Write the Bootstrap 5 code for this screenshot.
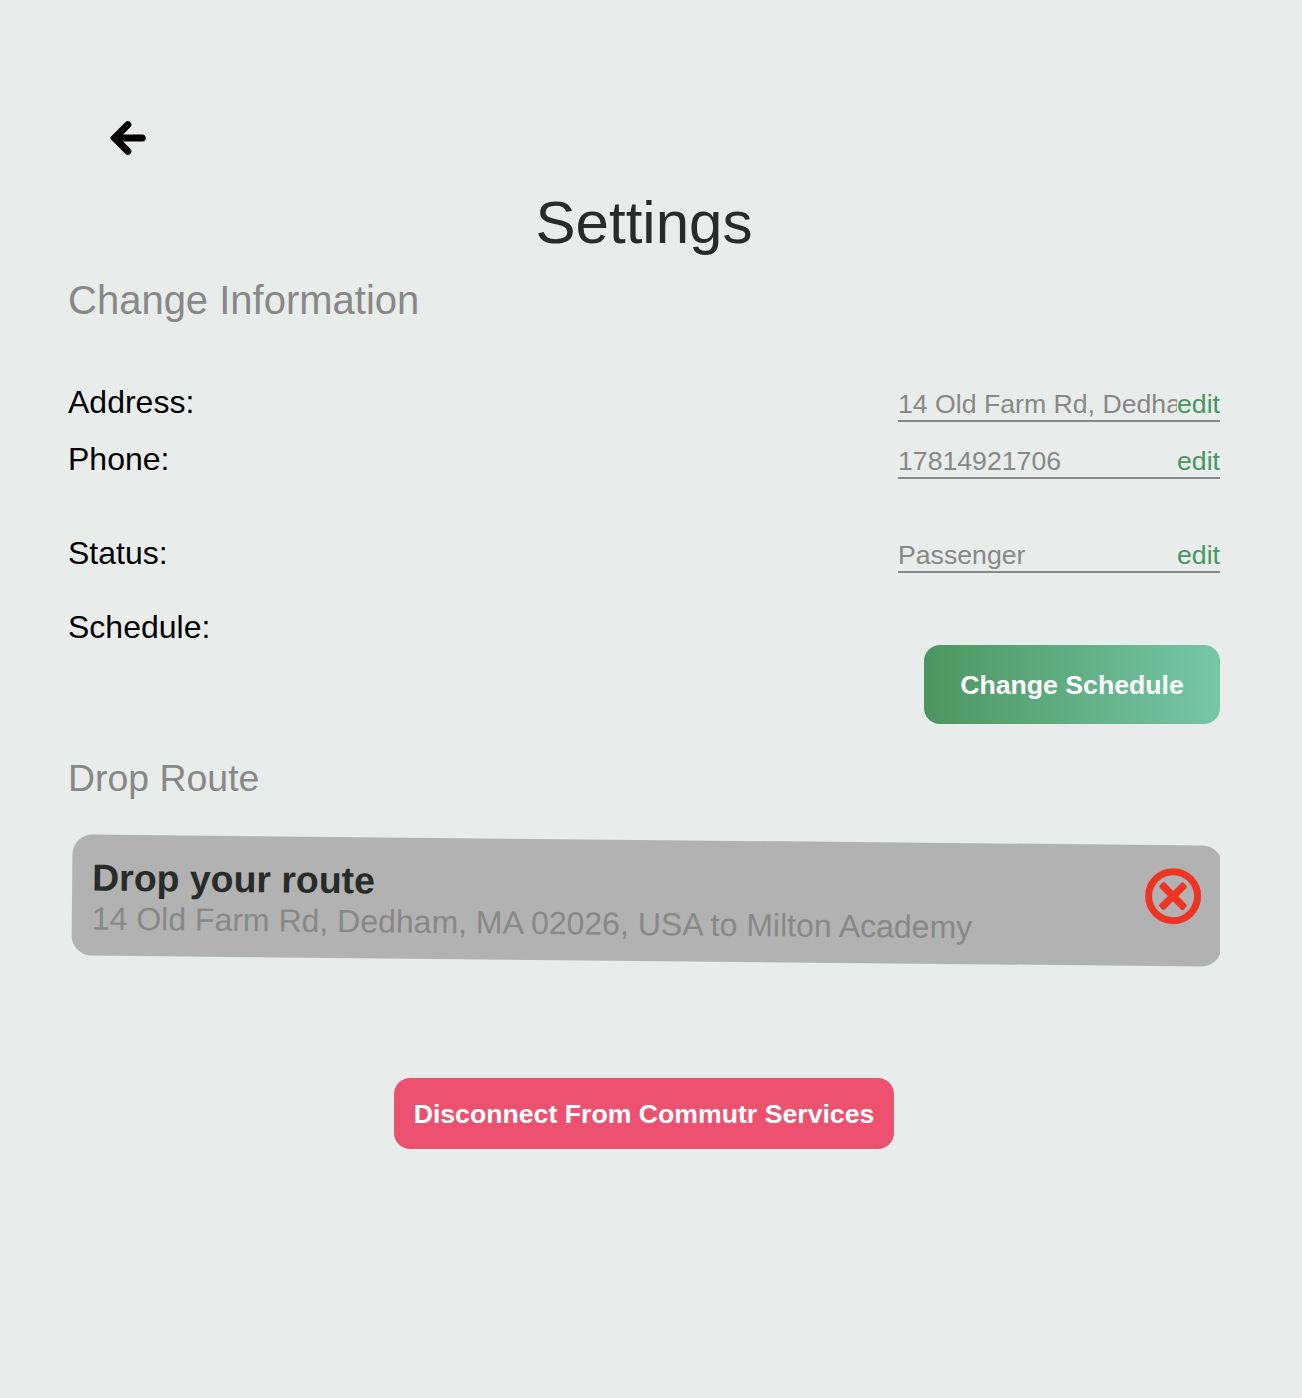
<!DOCTYPE html>
<html lang="en">
<head>
<meta charset="utf-8">
<meta name="viewport" content="width=device-width, initial-scale=1">
<title>Settings</title>
<link href="https://cdn.jsdelivr.net/npm/bootstrap@5.3.0/dist/css/bootstrap.min.css" rel="stylesheet">
<style>
body { background: #e8edeb; font-family: "Liberation Sans", Arial, sans-serif; color: #000; min-height: 1398px; }
.settings-page { width: 1152px; margin-left: 68px; padding-top: 118px; }
.back-link { margin-left: 42px; width: 40px; height: 40px; color: #000; }
.page-title { font-size: 60px; line-height: 60px; color: #272c2b; margin: 35px 0 27px; font-weight: 400; }
.section-title { color: #888; font-weight: 400; line-height: 40px; margin: 0; }
.section-info { font-size: 40px; margin-bottom: 62px; }
.section-drop { font-size: 37.44px; margin: 34px 0 22px; }
.field-label { font-size: 32px; line-height: 40px; }
.field-row { height: 40px; }
.row-phone { margin-top: 17px; }
.row-status { margin-top: 54px; }
.field-box { width: 322px; border-bottom: 2px solid #888; padding: 7px 0 1px; font-size: 26.67px; line-height: 30px; }
.field-value { color: #888; min-width: 0; }
.field-edit { color: #4a9560; text-decoration: none; }
.schedule-row { height: 117px; margin-top: 34px; }
.action-btn, .action-btn:hover { border: 0; border-radius: 16px; color: #fff; font-size: 26.67px; font-weight: 700; line-height: 30px; padding: 0; white-space: nowrap; }
.btn-schedule, .btn-schedule:hover { width: 296px; height: 79px; background: linear-gradient(90deg, #4d9561, #76c7a8); }
.btn-leave, .btn-leave:hover { width: 500px; height: 71px; background: #ec526f; }
.route-clip { height: 160px; padding-top: 20px; margin-bottom: 98px; }
.route-card { width: 1149.5px; height: 121.2px; border-radius: 20px; background: #b2b2b2; padding: 22.8px 20.5px 0 20px; transform: translateX(4px) rotate(.56deg); }
.route-name { font-size: 37.44px; line-height: 40px; font-weight: 700; color: #272c2b; margin: 0 0 2px; }
.route-path { font-size: 32px; line-height: 38px; color: #888; white-space: nowrap; }
.route-drop { width: 56px; height: 56px; }
</style>
</head>
<body>
<main class="settings-page d-flex flex-column">
  <a href="#" class="back-link d-block" aria-label="Back">
    <svg class="d-block" width="36" height="40" viewBox="0 0 36 40" fill="none" stroke="currentColor" stroke-width="7" stroke-linecap="round" stroke-linejoin="round"><path d="M17.8 6.8L4.6 20l13.2 13.2M5.2 20h27"/><path d="M1.8 20l2.4-2.4v4.8z" stroke-width="2.6" fill="currentColor"/></svg>
  </a>
  <h1 class="page-title text-center">Settings</h1>
  <h2 class="section-title section-info">Change Information</h2>

  <div class="field-row d-flex justify-content-between">
    <div class="field-label">Address:</div>
    <div class="field-box d-flex">
      <span class="field-value flex-grow-1 overflow-hidden text-nowrap">14 Old Farm Rd, Dedham, MA 02026, USA</span>
      <a href="#" class="field-edit">edit</a>
    </div>
  </div>
  <div class="field-row row-phone d-flex justify-content-between">
    <div class="field-label">Phone:</div>
    <div class="field-box d-flex">
      <span class="field-value flex-grow-1">17814921706</span>
      <a href="#" class="field-edit">edit</a>
    </div>
  </div>
  <div class="field-row row-status d-flex justify-content-between">
    <div class="field-label">Status:</div>
    <div class="field-box d-flex">
      <span class="field-value flex-grow-1">Passenger</span>
      <a href="#" class="field-edit">edit</a>
    </div>
  </div>
  <div class="schedule-row d-flex justify-content-between">
    <div class="field-label">Schedule:</div>
    <button type="button" class="btn action-btn btn-schedule align-self-end">Change Schedule</button>
  </div>

  <h3 class="section-title section-drop">Drop Route</h3>
  <div class="route-clip overflow-hidden">
    <div class="route-card d-flex justify-content-between align-items-start">
      <div>
        <h4 class="route-name">Drop your route</h4>
        <div class="route-path">14 Old Farm Rd, Dedham, MA 02026, USA to Milton Academy</div>
      </div>
      <svg class="route-drop" viewBox="0 0 56 56" role="img" aria-label="Drop route">
        <circle cx="28" cy="28" r="24.5" fill="none" stroke="#ee3524" stroke-width="7"/>
        <g fill="#ee3524" transform="rotate(45 28 28)">
          <rect x="11" y="24.3" width="34" height="7.4" rx="2"/>
          <rect x="24.3" y="11" width="7.4" height="34" rx="2"/>
        </g>
      </svg>
    </div>
  </div>
  <button type="button" class="btn action-btn btn-leave align-self-center">Disconnect From Commutr Services</button>
</main>
<script src="https://cdn.jsdelivr.net/npm/bootstrap@5.3.0/dist/js/bootstrap.bundle.min.js"></script>
</body>
</html>
